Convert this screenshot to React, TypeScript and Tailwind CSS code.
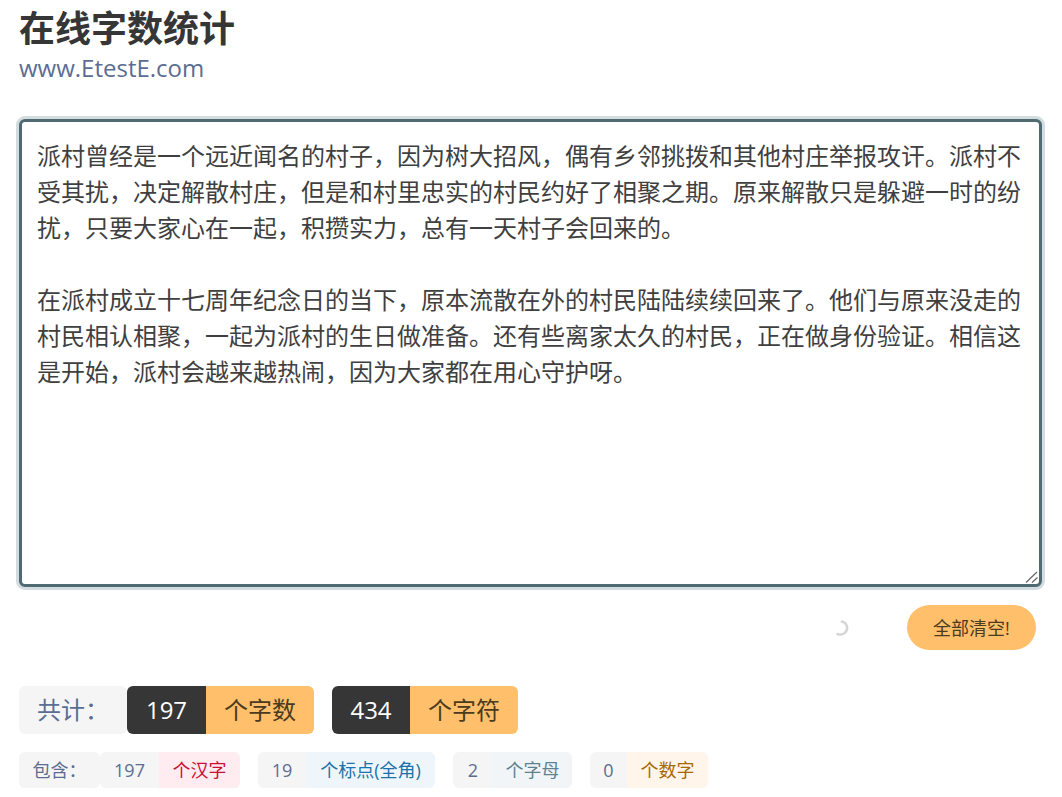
import { useState } from 'react';

const sample = `派村曾经是一个远近闻名的村子，因为树大招风，偶有乡邻挑拨和其他村庄举报攻讦。派村不受其扰，决定解散村庄，但是和村里忠实的村民约好了相聚之期。原来解散只是躲避一时的纷扰，只要大家心在一起，积攒实力，总有一天村子会回来的。

在派村成立十七周年纪念日的当下，原本流散在外的村民陆陆续续回来了。他们与原来没走的村民相认相聚，一起为派村的生日做准备。还有些离家太久的村民，正在做身份验证。相信这是开始，派村会越来越热闹，因为大家都在用心守护呀。`;

function BigTag({ count, label, countClass }: { count: number; label: string; countClass: string }) {
  return (
    <div className="flex h-12 overflow-hidden rounded-md">
      <span className={`flex items-center justify-center bg-[#363636] text-white ${countClass}`}>{count}</span>
      <span className="flex w-[108px] items-center justify-center bg-[#ffbf6b] text-[#4a3a20]">{label}</span>
    </div>
  );
}

function SmallTag({ count, label, labelClass, countClass }: { count: number; label: string; labelClass: string; countClass: string }) {
  return (
    <div className="flex h-9 overflow-hidden rounded-md bg-[#f5f5f5]">
      <span className={`flex items-center justify-center text-[#5d6d92] ${countClass}`}>{count}</span>
      <span className={`flex items-center justify-center ${labelClass}`}>{label}</span>
    </div>
  );
}

export default function App() {
  const [text, setText] = useState(sample);

  return (
    <div className="h-[797px] overflow-hidden bg-white px-[19px] pt-[5px] text-[#363636] [font-family:'Open_Sans','Noto_Sans_CJK_SC',sans-serif]">
      <h1 className="text-4xl leading-[48px] font-bold text-[#363636]">在线字数统计</h1>
      <p className="text-2xl leading-[30px] text-[#5a6d93]">www.EtestE.com</p>

      <div className="relative mt-9 w-[1023px]">
        <textarea
          value={text}
          onChange={(e) => setText(e.target.value)}
          className="block h-[468px] w-full resize-none rounded-md border-[3px] border-[#4f6b71] bg-white py-[16px] pr-[16px] pl-[15px] text-2xl leading-[36px] text-[#3f3f3f] shadow-[0_0_0_3px_#d3dcdf] outline-none"
        />
        <svg className="absolute right-[4px] bottom-[4px] h-[12px] w-[13px]" viewBox="0 0 13 12" fill="none">
          <path d="M1 11.5L12 1M7 11.5L12.5 6.5" stroke="#666666" strokeWidth="1.2" />
        </svg>
      </div>

      <div className="mt-[18px] flex h-[45px] items-center justify-end pr-[7px]">
        <svg className="mr-[58px] h-4 w-4" viewBox="0 0 16 16" fill="none">
          <path d="M9 1.5C13.5 2.5 15.5 7.5 13 11.5C11.2 14.3 7.5 15.2 4.5 14" stroke="#d6d6d6" strokeWidth="2.6" strokeLinecap="round" />
        </svg>
        <button className="h-[45px] w-[129px] rounded-full bg-[#ffbf6b] text-lg text-[#4a3a20]">全部清空!</button>
      </div>

      <div className="mt-9 flex gap-[18px] text-2xl">
        <div className="flex">
          <span className="flex h-12 w-[108px] items-center justify-center rounded-md bg-[#f5f5f5] text-[#5a6d93]">共计：</span>
          <BigTag count={197} label="个字数" countClass="w-[79px]" />
        </div>
        <BigTag count={434} label="个字符" countClass="w-[78px]" />
      </div>

      <div className="mt-[18px] flex gap-[18px] text-lg">
        <div className="flex">
          <span className="flex h-9 w-[81px] items-center justify-center rounded-md bg-[#f5f5f5] text-[#5d6d92]">包含：</span>
          <SmallTag count={197} label="个汉字" countClass="w-[59px]" labelClass="w-[81px] bg-[#feecf0] text-[#cc0f35]" />
        </div>
        <SmallTag count={19} label="个标点(全角)" countClass="w-[48px]" labelClass="w-[129px] bg-[#eef6fc] text-[#1d72aa]" />
        <SmallTag count={2} label="个字母" countClass="w-[40px]" labelClass="w-[79px] bg-[#f2f5f7] text-[#5d8290]" />
        <SmallTag count={0} label="个数字" countClass="w-[37px]" labelClass="w-[81px] bg-[#fff5eb] text-[#a66a00]" />
      </div>
    </div>
  );
}
